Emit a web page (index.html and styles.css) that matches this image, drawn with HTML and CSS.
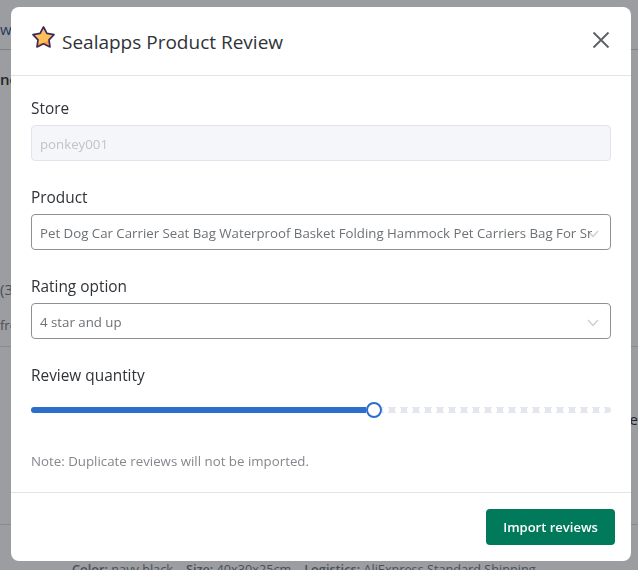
FILE: index.html
```html
<!DOCTYPE html>
<html lang="en">
<head>
    <meta charset="UTF-8">
    <meta name="viewport" content="width=device-width, initial-scale=1.0">
    <title>Sealapps Product Review</title>
    <link rel="stylesheet" href="styles.css">
</head>
<body>
    <!-- page behind the modal -->
    <div class="page">
        <div class="page-row row-tabs">w</div>
        <div class="page-row row-title">ne</div>
        <div class="page-row row-count">(3</div>
        <div class="page-row row-from">fro</div>
        <div class="page-row row-side">e</div>
        <div class="page-row row-last">
            <span><b>Color:</b> navy black</span>
            <span><b>Size:</b> 40x30x25cm</span>
            <span><b>Logistics:</b> AliExpress Standard Shipping</span>
        </div>
    </div>

    <div class="backdrop"></div>

    <div class="modal">
        <div class="modal-header">
            <svg class="star-icon" width="25" height="25" viewBox="0 0 25 25">
                <path d="M12.5 2l3.400 6.300 7.100 1.300-5 5.200 1 7.100-6.500-3.100-6.500 3.100 1-7.100-5-5.200 7.100-1.300z" fill="#ffc05c"/>
                <path d="M18 14.800l1 7.100-6.500-3.100-6.500 3.100 .6-3.600c4.500 .5 8.500-1.500 11.400-3.500z" fill="#f9a23c"/>
                <path d="M12.5 2l3.400 6.300 7.100 1.300-5 5.200 1 7.100-6.500-3.100-6.500 3.100 1-7.100-5-5.200 7.100-1.300z" fill="none" stroke="#3d2a5c" stroke-width="1.700" stroke-linejoin="round"/>
            </svg>
            <h1>Sealapps Product Review</h1>
            <svg class="close-icon" width="18" height="18" viewBox="0 0 18 18">
                <path d="M1.500 1.500l15 15M16.500 1.500l-15 15" fill="none" stroke="#5c5f62" stroke-width="1.800"/>
            </svg>
        </div>

        <div class="modal-body">
            <div class="field">
                <label>Store</label>
                <div class="input disabled">ponkey001</div>
            </div>
            <div class="field">
                <label>Product</label>
                <div class="input select">
                    <svg class="chevron" width="12" height="8" viewBox="0 0 12 8"><path d="M1 1l5 5.500 5-5.500" fill="none" stroke="#c9ccd1" stroke-width="1.200"/></svg>
                    <span class="value">Pet Dog Car Carrier Seat Bag Waterproof Basket Folding Hammock Pet Carriers Bag For Small Dogs</span>
                </div>
            </div>
            <div class="field">
                <label>Rating option</label>
                <div class="input select">
                    <svg class="chevron" width="12" height="8" viewBox="0 0 12 8"><path d="M1 1l5 5.500 5-5.500" fill="none" stroke="#c9ccd1" stroke-width="1.200"/></svg>
                    <span class="value">4 star and up</span>
                </div>
            </div>
            <div class="field">
                <label>Review quantity</label>
                <div class="slider">
                    <div class="slider-fill"></div>
                    <div class="slider-thumb"></div>
                    <div class="slider-rest"></div>
                </div>
            </div>
            <p class="note">Note: Duplicate reviews will not be imported.</p>
        </div>

        <div class="modal-footer">
            <button class="import-btn">Import reviews</button>
        </div>
    </div>
</body>
</html>
```

FILE: styles.css
```css
* {
    box-sizing: border-box;
}

html, body {
    height: 100%;
}

body {
    font-family: "Open Sans", "Noto Sans", Arial, sans-serif;
    color: #202223;
    background-color: #fff;
    margin: 0;
    overflow: hidden;
}

.page {
    height: 570px;
    display: flex;
    flex-direction: column;
    font-size: 15px;
}

.page-row {
    flex-shrink: 0;
    white-space: nowrap;
}

.row-tabs {
    height: 50px;
    padding-top: 19px;
    border-bottom: 1px solid #ccc;
    color: #2c4f8a;
}

.row-title {
    margin-top: 19px;
    font-weight: 600;
}

.row-count {
    margin-top: 190px;
    color: #6d7175;
}

.row-from {
    margin-top: 16px;
    padding-bottom: 11px;
    border-bottom: 1px solid #ddd;
    font-size: 13px;
    line-height: 20px;
    color: #6d7175;
}

.row-side {
    margin-top: 62px;
    text-align: right;
}

.row-last {
    margin-top: 95px;
    padding: 35px 0 0 72px;
    border-top: 1px solid #ddd;
    font-size: 12.700px;
    color: #6d7175;
    display: flex;
    gap: 13px;
}

.row-last b {
    font-weight: 600;
}

.backdrop {
    position: fixed;
    inset: 0;
    background-color: rgba(33, 38, 46, 0.45);
}

.modal {
    position: fixed;
    left: 11px;
    top: 7px;
    width: 620px;
    height: 554px;
    background-color: #fff;
    border-radius: 8px;
    display: flex;
    flex-direction: column;
}

.modal-header {
    height: 69px;
    padding: 0 20px;
    border-bottom: 1px solid #e1e3e5;
    display: flex;
    align-items: center;
}

.star-icon {
    flex-shrink: 0;
    margin-top: -7px;
}

.modal-header h1 {
    flex: 1;
    margin: 2px 0 0 6px;
    font-size: 19px;
    font-weight: 400;
    color: #303337;
}

.close-icon {
    margin-right: 1px;
    margin-top: -2px;
}

.modal-body {
    flex: 1;
    padding: 23px 20px 0;
}

.field {
    margin-bottom: 27px;
}

.field label {
    display: block;
    font-size: 15.400px;
    line-height: 20px;
    margin-bottom: 6px;
    color: #303337;
}

.input {
    height: 36px;
    padding: 0 8px;
    border: 1px solid #8c9196;
    border-radius: 4px;
    font-size: 13.250px;
    line-height: 36px;
    color: #6d7175;
    white-space: nowrap;
    overflow: hidden;
}

.input.disabled {
    background-color: #f4f6fa;
    border-color: #e1e4ec;
    color: #c0c3c9;
}

.select {
    position: relative;
    padding-right: 18px;
}

.select .value {
    position: relative;
    display: block;
    overflow: hidden;
}

.chevron {
    position: absolute;
    right: 11px;
    top: 15px;
}

.slider {
    display: flex;
    align-items: center;
    height: 16px;
    margin-top: 16px;
}

.slider-fill {
    width: 335px;
    height: 6px;
    background-color: #2c6ecb;
    border-radius: 3px 0 0 3px;
}

.slider-thumb {
    width: 16px;
    height: 16px;
    flex-shrink: 0;
    background-color: #fff;
    border: 2px solid #2c6ecb;
    border-radius: 50%;
}

.slider-rest {
    flex: 1;
    height: 6px;
    border-radius: 0 3px 3px 0;
    background-color: #e4e7ef;
    background-image: radial-gradient(circle at 4px 3px, #fff 3px, transparent 3.500px);
    background-size: 12px 6px;
}

.note {
    margin: 0;
    padding-top: 6px;
    font-size: 13.300px;
    line-height: 20px;
    color: #84888d;
}

.modal-footer {
    height: 69px;
    padding: 16px 16px 0;
    border-top: 1px solid #e1e3e5;
    display: flex;
    justify-content: flex-end;
    align-items: flex-start;
}

.import-btn {
    width: 129px;
    height: 36px;
    background-color: #007a5a;
    color: #fff;
    border: none;
    border-radius: 4px;
    font-family: inherit;
    font-size: 13px;
    font-weight: 600;
}
```
